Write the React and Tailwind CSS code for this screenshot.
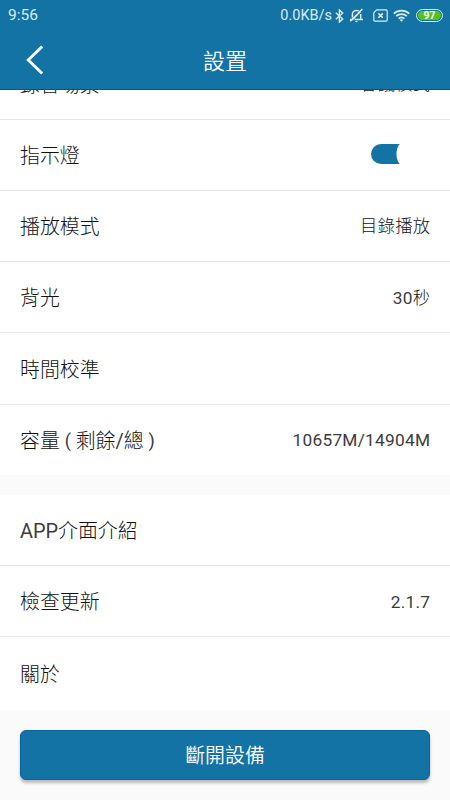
import { useState } from "react";

const deviceItems = [
  { label: "錄音場景", value: "會議模式" },
  { label: "指示燈", toggle: true },
  { label: "播放模式", value: "目錄播放" },
  { label: "背光", value: "30秒" },
  { label: "時間校準" },
  { label: "容量 ( 剩餘/總 )", value: "10657M/14904M" },
];

const appItems = [
  { label: "APP介面介紹" },
  { label: "檢查更新", value: "2.1.7" },
  { label: "關於" },
];

// 中文用細體，英文和數字用正常字重，括號略小
function MixedText({ text }) {
  return text.split(/([A-Z0-9./]+|[()])/).map((part, idx) => {
    let cls = "font-light";
    if (part === "(" || part === ")") cls = "font-normal text-[18px] relative -top-px text-[#3c3c3c]";
    else if (idx % 2) cls = "font-normal text-[#3c3c3c]";
    return (
      <span key={idx} className={cls}>
        {part}
      </span>
    );
  });
}

function StatusBar() {
  return (
    <div className="h-[31px] flex items-center pl-2 pr-[7px] text-[#dcebf3]">
      <span className="text-[15.5px] leading-none pt-px">9:56</span>
      <span className="ml-auto text-[14.5px] leading-none pt-[2px]">0.0KB/s</span>
      {/* 藍牙 */}
      <svg className="ml-[3px]" width="9" height="14" viewBox="0 0 9 14" fill="none" stroke="currentColor" strokeWidth="1.4">
        <path d="M.8 3.8 7.7 10 4.4 13V1l3.3 3L.8 10.2" />
      </svg>
      {/* 靜音 */}
      <svg className="ml-[5px]" width="15" height="15" viewBox="0 0 15 15" fill="none" stroke="currentColor" strokeWidth="1.5">
        <path d="M1 11.5h2.5l8-8M5.5 11.5H14M3.4 9.6V6.2C3.4 4 5 2.4 7.5 2.4c.9 0 1.7.2 2.3.6M11.7 6v5.3M1.3 13.2 13.4 1" />
        <path d="M5.9 13h3.2L7.5 14.6z" fill="currentColor" stroke="none" />
      </svg>
      {/* 無 SIM 卡 */}
      <svg className="ml-[9px]" width="15" height="13" viewBox="0 0 15 13" fill="none" stroke="currentColor" strokeWidth="1.2">
        <path d="M3.7.8h9.4c.7 0 1.1.4 1.1 1.1v9.2c0 .7-.4 1.1-1.1 1.1H1.9c-.7 0-1.1-.4-1.1-1.1V3.7z" />
        <path d="m5.4 4.4 4.4 4.4M9.8 4.4 5.4 8.8" strokeWidth="1.6" />
      </svg>
      {/* Wi-Fi */}
      <svg className="ml-[5px]" width="17" height="13" viewBox="0 0 17 13" fill="none" stroke="currentColor" strokeWidth="1.8">
        <path d="M.8 4.6c4.4-4.1 11-4.1 15.4 0M3.2 7.2c3-2.8 7.6-2.8 10.6 0M5.6 9.7c1.7-1.5 4.1-1.5 5.8 0" />
        <path d="m6.7 11 1.8 1.8 1.8-1.8c-1-.9-2.6-.9-3.6 0z" fill="currentColor" stroke="none" />
      </svg>
      <div className="ml-[6px] w-[27px] h-[13px] rounded-full border border-[#dcebf3] p-px">
        <div className="h-full rounded-full bg-[#52c41a] flex items-center justify-center pt-px text-[10.5px] leading-none font-bold text-white">
          97
        </div>
      </div>
    </div>
  );
}

function Row({ item, on, onToggle, last }) {
  return (
    <div
      className={`flex items-center justify-between px-5 text-[#111] ${
        last ? "" : "border-b border-[#e6e6e6]"
      }`}
    >
      <span className="pt-[4px] text-[19.9px] leading-none whitespace-pre">
        <MixedText text={item.label} />
      </span>
      {item.value && (
        <span className="pt-[2px] text-[17.3px] leading-none tracking-[0.25px] -mr-[0.25px]">
          <MixedText text={item.value} />
        </span>
      )}
      {item.toggle && (
        <button onClick={onToggle} aria-pressed={on} className="mr-[30px] -mt-[2px]">
          <svg width="29" height="20" viewBox="0 0 29 20">
            <path d="M10 0h18.7c-4.3 5-4.3 15 0 20H10A10 10 0 0 1 10 0z" fill={on ? "#1473a5" : "#bbb"} />
          </svg>
        </button>
      )}
    </div>
  );
}

export default function App() {
  const [light, setLight] = useState(true);

  return (
    <div className="w-full h-[800px] flex flex-col overflow-hidden bg-[#fafafa] font-[Roboto,'Noto_Sans_CJK_TC',sans-serif]">
      <header className="h-[90px] shrink-0 bg-[#1473a5] border-b border-[#06529a]">
        <StatusBar />
        <div className="h-[58px] grid grid-cols-[1fr_auto_1fr] items-center px-5 text-white">
          <button className="ml-[6px]">
            <svg width="18" height="30" viewBox="0 0 18 30" fill="none" stroke="currentColor" strokeWidth="2.8">
              <path d="M16.2 1.5 2.2 15l14 13.5" />
            </svg>
          </button>
          <h1 className="pt-[3px] text-[22px] leading-none font-[350]">設置</h1>
        </div>
      </header>

      <main className="flex-1 min-h-0 overflow-hidden">
        {/* 列表已向上捲動，第一行被標題列遮住一部分 */}
        <section className="-mt-[41.4px] h-[426.4px] grid grid-rows-[repeat(5,71.2px)_1fr] bg-white">
          {deviceItems.map((item, idx) => (
            <Row
              key={item.label}
              item={item}
              on={light}
              onToggle={() => setLight(!light)}
              last={idx === deviceItems.length - 1}
            />
          ))}
        </section>
        <section className="mt-5 h-[215px] grid grid-rows-[71.3px_71.2px_1fr] bg-white">
          {appItems.map((item, idx) => (
            <Row key={item.label} item={item} last={idx === appItems.length - 1} />
          ))}
        </section>
        <div className="px-5 pt-5">
          <button className="w-full h-[50px] rounded-md bg-[#1473a5] border border-[#0963a0] pt-[4px] text-white text-[19.9px] leading-none font-[350] shadow-[0_3px_3px_rgba(0,0,0,0.25)]">
            斷開設備
          </button>
        </div>
      </main>
    </div>
  );
}
